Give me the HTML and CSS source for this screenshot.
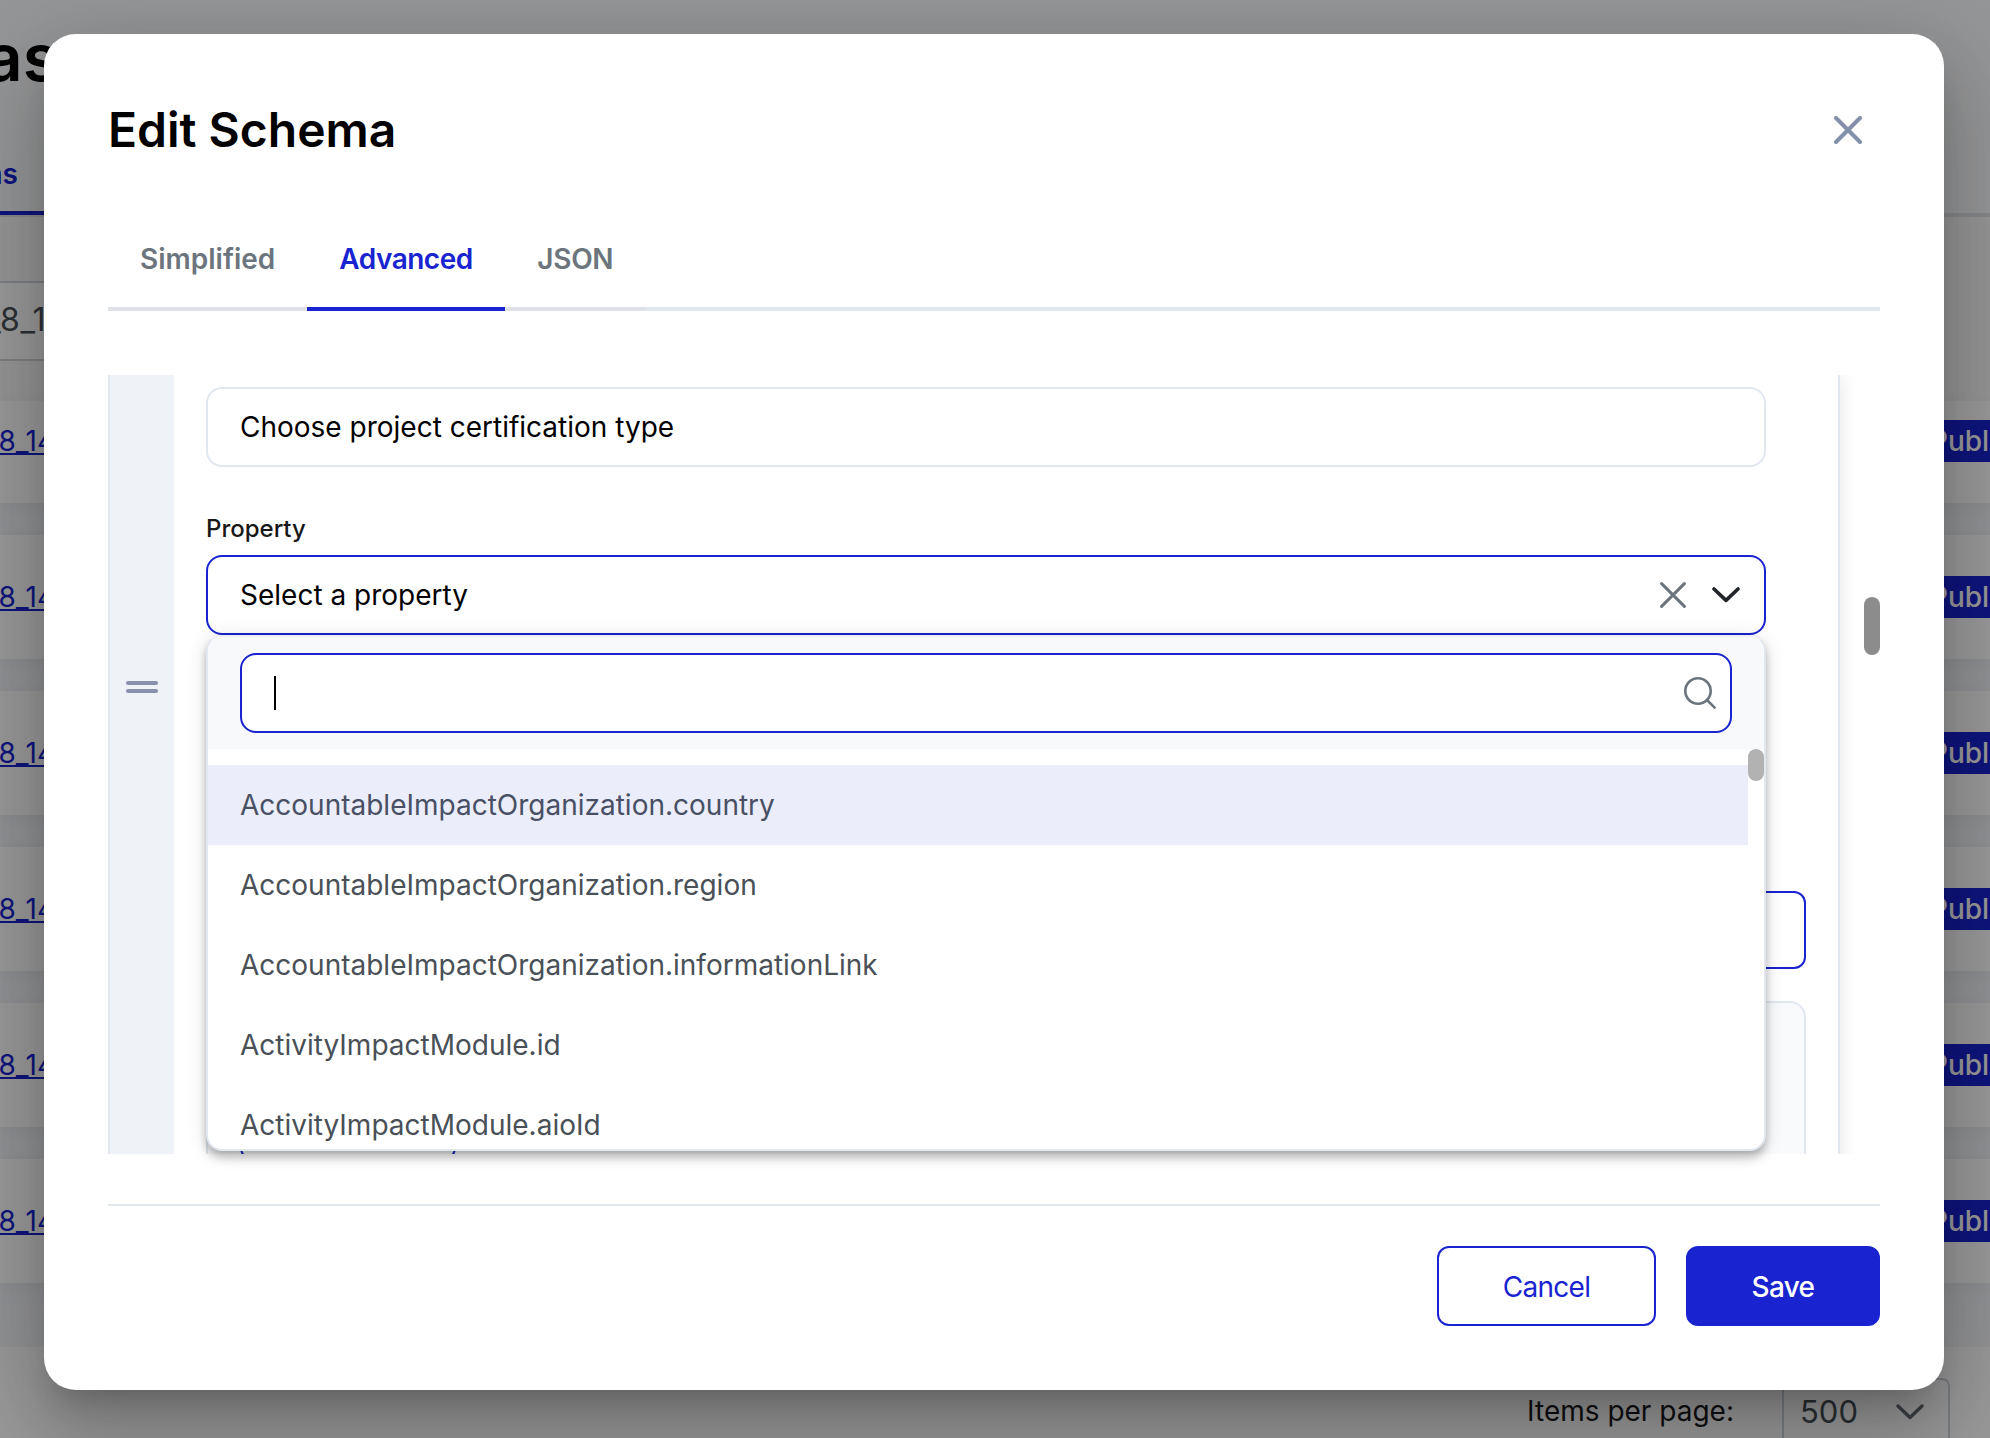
FILE: index.html
```html
<!DOCTYPE html>
<html lang="en">
<head>
<meta charset="utf-8">
<title>Edit Schema</title>
<link rel="stylesheet" href="styles.css">
</head>
<body>
<div class="page">
  <div class="page-head">
    <div class="page-title"><span>Schemas</span></div>
    <div class="page-tabs"><span class="page-tab">Schemas</span></div>
  </div>
  <div class="filters">
    <div class="filter"><span>_8_1725</span></div>
  </div>
  <div class="rows">
    <div class="row row-first"><a class="link">_8_14</a><span class="tag">Published</span></div>
    <div class="row"><a class="link">_8_14</a><span class="tag">Published</span></div>
    <div class="row"><a class="link">_8_14</a><span class="tag">Published</span></div>
    <div class="row"><a class="link">_8_14</a><span class="tag">Published</span></div>
    <div class="row"><a class="link">_8_14</a><span class="tag">Published</span></div>
    <div class="row"><a class="link">_8_14</a><span class="tag">Published</span></div>
  </div>
  <div class="pager">
    <span class="pager-label">Items per page:</span>
    <div class="pager-size">
      <span>500</span>
      <svg width="28" height="16" viewBox="0 0 28 16" fill="none" stroke="#646c74" stroke-width="3.4" stroke-linecap="round" stroke-linejoin="round"><path d="M2 2 14 13.4 26 2"/></svg>
    </div>
  </div>
</div>

<div class="overlay">
  <div class="modal">
    <header class="modal-head">
      <h1>Edit Schema</h1>
      <svg class="close" width="28" height="28" viewBox="0 0 28 28" fill="none" stroke="#848fa9" stroke-width="4" stroke-linecap="round"><path d="M2 2 26 26M26 2 2 26"/></svg>
    </header>
    <nav class="tabs">
      <span class="tab">Simplified</span>
      <span class="tab active">Advanced</span>
      <span class="tab json">JSON</span>
    </nav>
    <section class="content">
      <div class="viewport">
        <div class="field-card">
          <div class="grip"><i></i><i></i></div>
          <div class="field-body">
            <div class="input">Choose project certification type</div>
            <label class="label">Property</label>
            <div class="select">
              <span>Select a property</span>
              <svg width="26" height="26" viewBox="0 0 26 26" fill="none" stroke="#6c757d" stroke-width="3" stroke-linecap="round"><path d="M1.6 1.6 24.4 24.4M24.4 1.6 1.6 24.4"/></svg>
              <svg width="28" height="16" viewBox="0 0 28 16" fill="none" stroke="#212529" stroke-width="3.6" stroke-linecap="round" stroke-linejoin="round"><path d="M2 2 14 13.4 26 2"/></svg>
            </div>
            <div class="outlined"></div>
            <div class="enum-box"><div class="enum-action"></div></div>
          </div>
        </div>
      </div>
      <div class="scroll-thumb"></div>
      <div class="dropdown">
        <div class="search">
          <div class="search-input">
            <i class="caret"></i>
            <svg width="32" height="32" viewBox="0 0 32 32" fill="none" stroke="#6c757d" stroke-width="2.6" stroke-linecap="round"><circle cx="14" cy="14" r="12.7"/><path d="m23 23 7.6 7.6"/></svg>
          </div>
        </div>
        <div class="options">
          <div class="option on">AccountableImpactOrganization.country</div>
          <div class="option">AccountableImpactOrganization.region</div>
          <div class="option">AccountableImpactOrganization.informationLink</div>
          <div class="option">ActivityImpactModule.id</div>
          <div class="option">ActivityImpactModule.aioId</div>
          <div class="options-thumb"></div>
        </div>
      </div>
    </section>
    <footer class="modal-foot">
      <button class="btn">Cancel</button>
      <button class="btn primary">Save</button>
    </footer>
  </div>
</div>
</body>
</html>
```

FILE: styles.css
```css
* { box-sizing: border-box; }

body {
  margin: 0;
  width: 1990px;
  height: 1438px;
  overflow: hidden;
  position: relative;
  font-family: Inter, "Liberation Sans", sans-serif;
  font-size: 28px;
  color: #000;
}

/* page behind the dialog */
.page {
  height: 1438px;
  overflow: hidden;
  display: flex;
  flex-direction: column;
  background: #f8fafc;
}

.page-head {
  height: 217px;
  flex: none;
  display: flex;
  flex-direction: column;
  justify-content: space-between;
  border-bottom: 4px solid #dfe3e8;
}

.page-title {
  width: 59px;
  height: 84px;
  margin-top: 15px;
  display: flex;
  align-items: center;
  justify-content: flex-end;
  font-size: 66px;
  font-weight: 600;
}

.page-tabs { display: flex; margin-bottom: -2px; }

.page-tab {
  width: 50px;
  height: 58px;
  padding-right: 32px;
  display: flex;
  justify-content: flex-end;
  font-weight: 600;
  color: #1924d0;
  border-bottom: 4px solid #1924d0;
}

.filters {
  height: 184px;
  flex: none;
  padding-top: 64px;
  background: #f9f9fa;
}

.filter {
  height: 80px;
  padding-bottom: 4px;
  display: flex;
  align-items: center;
  font-size: 32px;
  letter-spacing: .8px;
  color: #495057;
  background: #fff;
  border: solid #ced4da;
  border-width: 2px 0;
  width: 160px;
  margin-left: -14px;
}

.rows {
  flex: none;
  height: 946px;
  display: flex;
  flex-direction: column;
  gap: 32px;
  background: #f3f5f9;
}

.row {
  height: 124px;
  flex: none;
  display: flex;
  align-items: center;
  justify-content: space-between;
  background: #fff;
  box-shadow: 0 4px 24px rgba(0, 0, 0, .06);
}

.row-first { height: 102px; padding-bottom: 22px; }

.link {
  margin-left: -13px;
  color: #1924d0;
  text-decoration: underline;
}

.tag {
  width: 60px;
  height: 42px;
  display: flex;
  align-items: center;
  overflow: hidden;
  font-weight: 500;
  color: #fff;
  background: #1924d0;
}

.pager {
  flex: 1;
  display: flex;
  justify-content: flex-end;
  gap: 48px;
  padding: 31px 40px 0 0;
  background: #fff;
  border-bottom: 1px solid #dfe3e8;
}

.pager-label { height: 66px; line-height: 66px; color: #1b1b1f; }

.pager-size {
  width: 168px;
  height: 70px;
  flex: none;
  display: flex;
  align-items: center;
  justify-content: space-between;
  padding: 0 24px 3px 16px;
  font-size: 31px;
  color: #495057;
  border: 2px solid #ced4da;
  border-radius: 8px;
}

/* dialog */
.overlay {
  position: absolute;
  inset: 0;
  padding: 34px 46px 0 44px;
  background: rgba(0, 0, 0, .4);
}

.modal {
  height: 1356px;
  padding: 0 64px;
  display: flex;
  flex-direction: column;
  background: #fff;
  border-radius: 32px;
  box-shadow: 0 22px 30px -14px rgba(0, 0, 0, .2),
    0 48px 76px 6px rgba(0, 0, 0, .14),
    0 18px 92px 16px rgba(0, 0, 0, .12);
}

.modal-head {
  height: 192px;
  padding: 0 18px 0 0;
  display: flex;
  align-items: center;
  justify-content: space-between;
}

.modal-head h1 {
  margin: 0;
  font-size: 48px;
  font-weight: 600;
  line-height: 58px;
}

.tabs {
  height: 85px;
  display: flex;
  border-bottom: 4px solid #e1e7ef;
}

.tab {
  height: 85px;
  padding: 16px 32px 0;
  line-height: 34px;
  font-weight: 600;
  color: #6c757d;
  border-bottom: 4px solid #dee2e6;
}

.tab.active {
  width: 198px;
  letter-spacing: -.5px;
  color: #1924d0;
  border-color: #1924d0;
}

.tab.json { width: 141px; letter-spacing: -.3px; }

.content {
  position: relative;
  height: 779px;
  margin-top: 64px;
}

.viewport { height: 779px; overflow: hidden; }

.field-card {
  width: 1732px;
  height: 860px;
  display: flex;
  border: solid #e1e7ef;
  border-width: 0 2px;
  box-shadow: 0 0 18px rgba(0, 0, 0, .1);
  clip-path: inset(0 -30px 0 0);
}

.grip {
  width: 64px;
  height: 624px;
  display: flex;
  flex-direction: column;
  align-items: center;
  justify-content: center;
  gap: 4px;
  background: #eff3f8;
  box-shadow: 0 240px #eff3f8;
}

.grip i {
  width: 32px;
  height: 4px;
  border-radius: 2px;
  background: #8a91ad;
}

.field-body { width: 1600px; margin-left: 32px; padding-top: 12px; }

.input, .select {
  width: 1560px;
  height: 80px;
  padding: 0 32px;
  display: flex;
  align-items: center;
  background: #fff;
  border: 2px solid #e1e7ef;
  border-radius: 16px;
}

.label {
  display: block;
  margin-top: 47px;
  height: 41px;
  line-height: 30px;
  font-size: 24px;
  font-weight: 500;
  color: #181818;
}

.select { padding-right: 24px; gap: 26px; border-color: #1924d0; }
.select span { flex: 1; }

.outlined {
  height: 78px;
  margin-top: 256px;
  border: 2px solid #1924d0;
  border-radius: 12px;
}

.enum-box {
  height: 300px;
  margin-top: 32px;
  padding: 77px 32px 0;
  background: #f8fafc;
  border: 2px solid #e1e7ef;
  border-radius: 16px;
}

.enum-action {
  width: 216px;
  height: 80px;
  border: 2px solid #1924d0;
  border-radius: 12px;
}

.scroll-thumb {
  position: absolute;
  right: 0;
  top: 222px;
  width: 16px;
  height: 58px;
  border-radius: 8px;
  background: #8c8c8c;
}

.dropdown {
  position: absolute;
  left: 98px;
  top: 260px;
  width: 1560px;
  height: 516px;
  overflow: hidden;
  background: #fff;
  border: 2px solid #e1e7ef;
  border-radius: 16px;
  border-top-color: #eceef5;
  box-shadow: 0 4px 8px -2px rgba(0, 0, 0, .2),
    0 8px 10px 0 rgba(0, 0, 0, .14),
    0 2px 20px 0 rgba(0, 0, 0, .12);
}

.search { height: 112px; padding: 16px 32px; background: #f8f9fb; }

.search-input {
  height: 80px;
  padding: 0 14px 0 32px;
  display: flex;
  align-items: center;
  justify-content: space-between;
  background: #fff;
  border: 2px solid #1924d0;
  border-radius: 16px;
}

.caret { width: 2px; height: 34px; background: #000; }

.options { position: relative; height: 400px; padding: 16px 16px 0 0; }

.option {
  height: 80px;
  padding-left: 32px;
  line-height: 80px;
  color: #495057;
}

.option.on { background: #ebedfa; color: #495065; }

.options-thumb {
  position: absolute;
  right: 0;
  top: 0;
  width: 16px;
  height: 32px;
  border-radius: 8px;
  background: #b2b2b2;
}

.modal-foot {
  margin-top: 50px;
  padding-top: 40px;
  display: flex;
  justify-content: flex-end;
  gap: 30px;
  border-top: 2px solid #e1e7ef;
}

.btn {
  width: 219px;
  height: 80px;
  padding: 2px 0 0;
  font: 400 28px Inter, "Liberation Sans", sans-serif;
  letter-spacing: -.7px;
  color: #1924d0;
  background: #fff;
  border: 2px solid #1924d0;
  border-radius: 12px;
}

.btn.primary { width: 194px; font-weight: 500; color: #fff; background: #1924d0; }
```
